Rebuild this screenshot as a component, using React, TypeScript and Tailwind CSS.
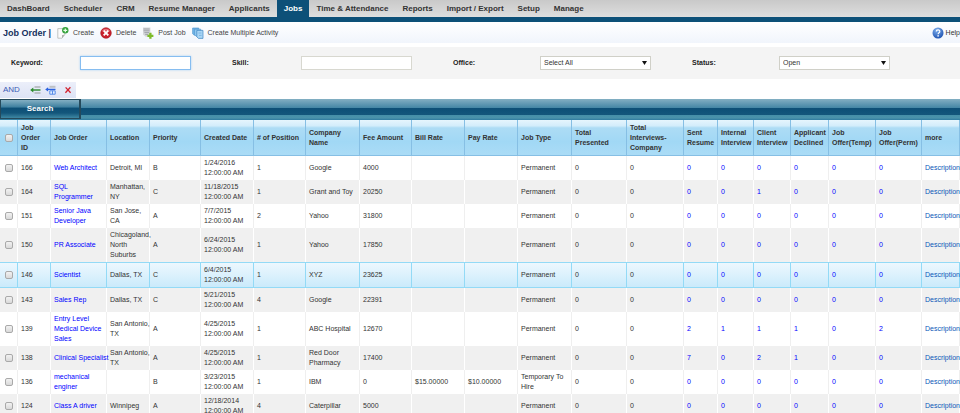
import { useState } from 'react';

const TABS = [
  'DashBoard',
  'Scheduler',
  'CRM',
  'Resume Manager',
  'Applicants',
  'Jobs',
  'Time & Attendance',
  'Reports',
  'Import / Export',
  'Setup',
  'Manage',
];

const COLUMNS = [
  { label: 'Job Order ID', width: 'w-[33px]' },
  { label: 'Job Order', width: 'w-[56px]' },
  { label: 'Location', width: 'w-[43px]' },
  { label: 'Priority', width: 'w-[51px]' },
  { label: 'Created Date', width: 'w-[53px]' },
  { label: '# of Position', width: 'w-[52px]' },
  { label: 'Company Name', width: 'w-[54px]' },
  { label: 'Fee Amount', width: 'w-[52px]' },
  { label: 'Bill Rate', width: 'w-[53px]' },
  { label: 'Pay Rate', width: 'w-[53px]' },
  { label: 'Job Type', width: 'w-[54px]' },
  { label: 'Total Presented', width: 'w-[55px]' },
  { label: 'Total Interviews-Company', width: 'w-[57px]' },
  { label: 'Sent Resume', width: 'w-[34px]' },
  { label: 'Internal Interview', width: 'w-[36px]' },
  { label: 'Client Interview', width: 'w-[37px]' },
  { label: 'Applicant Declined', width: 'w-[38px]' },
  { label: 'Job Offer(Temp)', width: 'w-[47px]' },
  { label: 'Job Offer(Perm)', width: 'w-[46px]' },
  { label: 'more', width: 'w-[38px]' },
];

type Job = {
  id: number;
  title: string;
  // one entry per printed line
  location: string[];
  priority: string;
  date: string;
  positions: number;
  company: string;
  fee: string;
  bill?: string;
  pay?: string;
  type: string;
  // sent, internal, client, declined, temp, perm
  counts: number[];
};

const JOBS: Job[] = [
  { id: 166, title: 'Web Architect', location: ['Detroit, MI'], priority: 'B', date: '1/24/2016', positions: 1, company: 'Google', fee: '4000', type: 'Permanent', counts: [0, 0, 0, 0, 0, 0] },
  { id: 164, title: 'SQL Programmer', location: ['Manhattan,', 'NY'], priority: 'C', date: '11/18/2015', positions: 1, company: 'Grant and Toy', fee: '20250', type: 'Permanent', counts: [0, 0, 1, 0, 0, 0] },
  { id: 151, title: 'Senior Java Developer', location: ['San Jose,', 'CA'], priority: 'A', date: '7/7/2015', positions: 2, company: 'Yahoo', fee: '31800', type: 'Permanent', counts: [0, 0, 0, 0, 0, 0] },
  { id: 150, title: 'PR Associate', location: ['Chicagoland,', 'North', 'Suburbs'], priority: 'A', date: '6/24/2015', positions: 1, company: 'Yahoo', fee: '17850', type: 'Permanent', counts: [0, 0, 0, 0, 0, 0] },
  { id: 146, title: 'Scientist', location: ['Dallas, TX'], priority: 'C', date: '6/4/2015', positions: 1, company: 'XYZ', fee: '23625', type: 'Permanent', counts: [0, 0, 0, 0, 0, 0] },
  { id: 143, title: 'Sales Rep', location: ['Dallas, TX'], priority: 'C', date: '5/21/2015', positions: 4, company: 'Google', fee: '22391', type: 'Permanent', counts: [0, 0, 0, 0, 0, 0] },
  { id: 139, title: 'Entry Level Medical Device Sales', location: ['San Antonio,', 'TX'], priority: 'A', date: '4/25/2015', positions: 1, company: 'ABC Hospital', fee: '12670', type: 'Permanent', counts: [2, 1, 1, 1, 0, 2] },
  { id: 138, title: 'Clinical\u00a0Specialist', location: ['San Antonio,', 'TX'], priority: 'A', date: '4/25/2015', positions: 1, company: 'Red Door Pharmacy', fee: '17400', type: 'Permanent', counts: [7, 0, 2, 1, 0, 0] },
  { id: 136, title: 'mechanical enginer', location: [], priority: 'B', date: '3/23/2015', positions: 1, company: 'IBM', fee: '0', bill: '$15.00000', pay: '$10.00000', type: 'Temporary To Hire', counts: [0, 0, 0, 0, 0, 0] },
  { id: 124, title: 'Class A driver', location: ['Winnipeg'], priority: 'A', date: '12/18/2014', positions: 4, company: 'Caterpillar', fee: '5000', type: 'Permanent', counts: [0, 0, 0, 0, 0, 0] },
];

const CHECKBOX =
  'block size-2 mx-auto appearance-none rounded-[2px] border border-[#a9a9a9] bg-linear-to-b from-[#f2f2f2] to-[#d9d9d9] checked:bg-[#3b82c4] checked:bg-none';

function CreateIcon() {
  return (
    <svg width="12" height="12" viewBox="0 0 12 12">
      <path d="M.8 1.6h7v6L5 11.2H.8z" fill="#fbfbfb" stroke="#b4b8b4" strokeWidth=".8" />
      <path d="M5 11.2V8.2l2.8-.6z" fill="#a9aea9" />
      <circle cx="8.3" cy="3.3" r="3.2" fill="#33a13b" />
      <path d="M8.3 1.4v3.8M6.4 3.3h3.8" stroke="#e8ffe6" strokeWidth="1.2" />
    </svg>
  );
}

function DeleteIcon() {
  return (
    <svg width="12" height="12" viewBox="0 0 12 12">
      <circle cx="6" cy="6" r="5.3" fill="#c9202c" stroke="#a5141f" strokeWidth=".6" />
      <path d="M1.7 4.6a4.6 4.6 0 0 1 8.6 0C8 3.4 4 3.4 1.7 4.6z" fill="#e8707a" />
      <path d="M3.7 3.7l4.6 4.6M8.3 3.7L3.7 8.3" stroke="#fff" strokeWidth="1.9" />
    </svg>
  );
}

function PostIcon() {
  return (
    <svg width="12" height="12" viewBox="0 0 12 12">
      <path d="M1 .4h7.4v9.4H3.6L1 7.6z" fill="#d5d7da" />
      <path d="M1.6 2h6M1.6 3.8h6M2.4 5.6h4.6M3.2 7.4h2.8" stroke="#9a9ea5" strokeWidth=".9" />
      <path d="M8.4 5.8v6M5.4 8.8h6" stroke="#7dbb28" strokeWidth="2.3" />
    </svg>
  );
}

function ActivityIcon() {
  return (
    <svg width="12" height="12" viewBox="0 0 12 12">
      <path d="M.6 1h6.2v7.2H2.2L.6 6.8z" fill="#6fb4e6" stroke="#4b92cc" strokeWidth=".6" />
      <path d="M2.6 2.2h6.2v7.2H4.4L2.6 7.8z" fill="#93cbf2" stroke="#4b92cc" strokeWidth=".6" />
      <path d="M4.8 3.4H11v8H6.4L4.8 9.8z" fill="#a9d6f5" stroke="#3f85c2" strokeWidth=".7" />
      <path d="M6.4 6h3M7 8.4h2.6" stroke="#6aaadf" strokeWidth=".7" />
    </svg>
  );
}

function HelpIcon() {
  return (
    <svg width="12" height="12" viewBox="0 0 12 12">
      <defs>
        <radialGradient id="help" cx=".4" cy=".25" r=".8">
          <stop offset="0" stopColor="#7fb0ee" />
          <stop offset="1" stopColor="#1b4fae" />
        </radialGradient>
      </defs>
      <circle cx="6" cy="6" r="5.5" fill="url(#help)" />
      <path d="M4.3 4.6c0-2.3 3.5-2.2 3.5-.2 0 1.3-1.7 1.3-1.7 2.8" fill="none" stroke="#fff" strokeWidth="1.2" />
      <circle cx="6.1" cy="8.9" r=".8" fill="#fff" />
    </svg>
  );
}

function AddConditionIcon() {
  return (
    <svg width="11" height="10" viewBox="0 0 11 10">
      <path d="M4.5 1h6v2h-6zM4.5 7h6v2h-6z" fill="#bcc0c6" />
      <path d="M2.5 5h8" stroke="#2c8a2c" strokeWidth="1.4" />
      <path d="M.2 5l3.1-2.4v4.8z" fill="#2c8a2c" />
    </svg>
  );
}

function AddGroupIcon() {
  return (
    <svg width="11" height="10" viewBox="0 0 11 10">
      <path d="M4.5 .8h6v2h-6z" fill="#bcc0c6" />
      <path d="M2.5 4.4h8" stroke="#2b62e0" strokeWidth="1.3" />
      <path d="M.2 4.4l2.9-2.2v4.4z" fill="#2b62e0" />
      <path d="M4.8 5.8h5.4v3.4H4.8zM7.5 5.8v3.4" fill="#e3efff" stroke="#4a82e6" strokeWidth=".9" />
    </svg>
  );
}

function RemoveIcon() {
  return (
    <svg width="8" height="8" viewBox="0 0 8 8">
      <path d="M1.6 1.4l5 5.4M6.4 1.2L1.4 6.8" stroke="#d2232f" strokeWidth="1.3" />
    </svg>
  );
}

function SelectField({ id, options }: { id: string; options: string[] }) {
  return (
    <div className="relative flex-1">
      <select id={id} className="block w-full h-[14px] pl-[3px] pr-3 appearance-none border border-[#d0d0c8] bg-white text-[7px] leading-3 text-[#333]">
        {options.map(o => (
          <option key={o}>{o}</option>
        ))}
      </select>
      <svg className="absolute right-1 top-[5px] pointer-events-none" width="5" height="4" viewBox="0 0 5 4">
        <path d="M0 0h5L2.5 4z" fill="#111" />
      </svg>
    </div>
  );
}

function JobRow({ job, index, selected, checked, onToggle }: { job: Job; index: number; selected: boolean; checked: boolean; onToggle: () => void }) {
  let row = index % 2 ? 'bg-[#f0f0f0]' : 'bg-white';
  let cell = index % 2 ? 'border-r border-white pl-[3px] py-[2px]' : 'border-r border-[#efefef] pl-[3px] py-[2px]';
  if (selected) {
    row = 'bg-linear-to-b from-[#eef8fe] to-[#c9eafb]';
    cell = 'border-r border-y border-[#93daf6] pl-[3px] py-[2px]';
  }
  return (
    <tr className={row}>
      <td className={`${cell} pr-[2px]`}>
        <input type="checkbox" className={CHECKBOX} aria-label={`Select ${job.id}`} checked={checked} onChange={onToggle} />
      </td>
      <td className={cell}>{job.id}</td>
      <td className={cell}>
        <a href="#job" className="text-[#0000ff]">{job.title}</a>
      </td>
      <td className={cell}>
        {job.location.map(line => (
          <div key={line} className="whitespace-nowrap">{line}</div>
        ))}
      </td>
      <td className={cell}>{job.priority}</td>
      <td className={cell}>
        <div>{job.date}</div>
        <div className="whitespace-nowrap">12:00:00 AM</div>
      </td>
      <td className={cell}>{job.positions}</td>
      <td className={cell}>{job.company}</td>
      <td className={cell}>{job.fee}</td>
      <td className={cell}>{job.bill}</td>
      <td className={cell}>{job.pay}</td>
      <td className={cell}>{job.type}</td>
      <td className={cell}>0</td>
      <td className={cell}>0</td>
      {job.counts.map((n, i) => (
        <td key={i} className={cell}>
          <a href="#count" className="text-[#0000ff]">{n}</a>
        </td>
      ))}
      <td className={cell}>
        <a href="#description" className="text-[#0a58b8]">Description</a>
      </td>
    </tr>
  );
}

export default function App() {
  const [activeTab, setActiveTab] = useState('Jobs');
  const [checked, setChecked] = useState<number[]>([]);

  const toggle = (id: number) => {
    setChecked(prev => (prev.includes(id) ? prev.filter(c => c !== id) : [...prev, id]));
  };

  const action = 'flex items-center gap-1 text-[7px] leading-[10px] text-[#444] whitespace-nowrap';
  const label = 'shrink-0 text-[7px] leading-[14px] font-bold text-[#222]';
  const field = 'block flex-1 min-w-0 h-[14px] px-[3px] border bg-white text-[7px] outline-none';

  return (
    <div className="h-screen overflow-hidden bg-white font-['Liberation_Sans',Arial,sans-serif] text-[#333]">
      <nav className="flex h-[22px] pr-2 bg-linear-to-b from-[#c9c9c9] to-[#dedede] border-b-[5px] border-[#0d5078]">
        {TABS.map(tab => (
          <button
            key={tab}
            onClick={() => setActiveTab(tab)}
            className={
              tab === activeTab
                ? 'px-[7px] h-[18px] bg-[#0d5078] text-white text-[8px] leading-[18px] font-bold whitespace-nowrap'
                : 'px-[7px] h-[17px] text-[#333] text-[8px] leading-[18px] font-bold whitespace-nowrap'
            }
          >
            {tab}
          </button>
        ))}
      </nav>

      <header className="flex items-center h-[21px] pl-[3px] gap-[6px] bg-linear-to-b from-white to-[#f1f5fc]">
        <h1 className="text-[9px] leading-3 font-bold text-[#14305e] whitespace-nowrap">Job Order |</h1>
        <button className={action}><CreateIcon />Create</button>
        <button className={action}><DeleteIcon />Delete</button>
        <button className={action}><PostIcon />Post Job</button>
        <button className={action}><ActivityIcon />Create Multiple Activity</button>
        <a href="#help" className="flex items-center gap-[2px] shrink-0 ml-auto text-[7px] leading-[10px] text-[#333] whitespace-nowrap">
          <HelpIcon />Help
        </a>
      </header>

      <form onSubmit={e => e.preventDefault()}>
        <div className="grid grid-cols-[180fr_180fr_198fr_198fr] gap-[41px] mt-1 pl-[11px] pr-[70px] py-[9px] bg-[#f4f4f4]">
          <div className="flex">
            <label htmlFor="keyword" className={`${label} w-[69px]`}>Keyword:</label>
            <input id="keyword" type="text" className={`${field} border-[#86bdf0] shadow-[0_0_2px_#a8d2f8]`} />
          </div>
          <div className="flex">
            <label htmlFor="skill" className={`${label} w-[69px]`}>Skill:</label>
            <input id="skill" type="text" className={`${field} border-[#d8d8d0]`} />
          </div>
          <div className="flex">
            <label htmlFor="office" className={`${label} w-[87px]`}>Office:</label>
            <SelectField id="office" options={['Select All']} />
          </div>
          <div className="flex">
            <label htmlFor="status" className={`${label} w-[87px]`}>Status:</label>
            <SelectField id="status" options={['Open', 'Closed']} />
          </div>
        </div>

        <div className="flex items-center w-[76px] h-4 mt-[3px] pl-[3px] gap-1 bg-linear-to-b from-[#eceffa] to-[#dde3f5]">
          <button type="button" className="mr-[6px] text-[8px] leading-4 text-[#3d5bb5]">AND</button>
          <button type="button" aria-label="Add condition"><AddConditionIcon /></button>
          <button type="button" aria-label="Add group"><AddGroupIcon /></button>
          <button type="button" aria-label="Remove" className="ml-1"><RemoveIcon /></button>
        </div>

        <div className="flex mt-px h-[21px] bg-[linear-gradient(#83afc3_0,#4486a5_42%,#0d4f76_44%,#13567b_75%,#468fa8_78%,#4a92aa_90%,#2f7ba0_100%)]">
          <button type="submit" className="w-[81px] h-5 border border-r-2 border-[#254a5c] bg-[linear-gradient(#83afc3_0,#3d7f9f_40%,#0d4f76_44%,#13567b_72%,#3f88a3_100%)] text-[8px] leading-[18px] font-bold text-white">
            Search
          </button>
        </div>
      </form>

      <table className="w-full min-w-[960px] table-fixed border-separate border-spacing-0 text-[7px] leading-[10px]">
        <thead>
          <tr className="h-9 bg-[linear-gradient(#e6f5fd_0,#d3edfb_16%,#addcf5_22%,#a1d8f5_60%,#abdcf6_100%)]">
            <th className="w-[18px] py-0 pl-[3px] pr-[2px] border-r border-b border-[#86bfe4]">
              <input type="checkbox" className={CHECKBOX} aria-label="Select all" checked={checked.length === JOBS.length} onChange={() => setChecked(checked.length ? [] : JOBS.map(j => j.id))} />
            </th>
            {COLUMNS.map(col => (
              <th key={col.label} className={`${col.width} py-0 pl-[3px] border-r border-b border-[#86bfe4] text-left font-bold`}>
                {col.label === 'Job Order ID' ? <>Job<br />Order<br />ID</> : col.label}
              </th>
            ))}
          </tr>
        </thead>
        <tbody>
          {JOBS.map((job, i) => (
            <JobRow key={job.id} job={job} index={i} selected={job.id === 146} checked={checked.includes(job.id)} onToggle={() => toggle(job.id)} />
          ))}
        </tbody>
      </table>
    </div>
  );
}
